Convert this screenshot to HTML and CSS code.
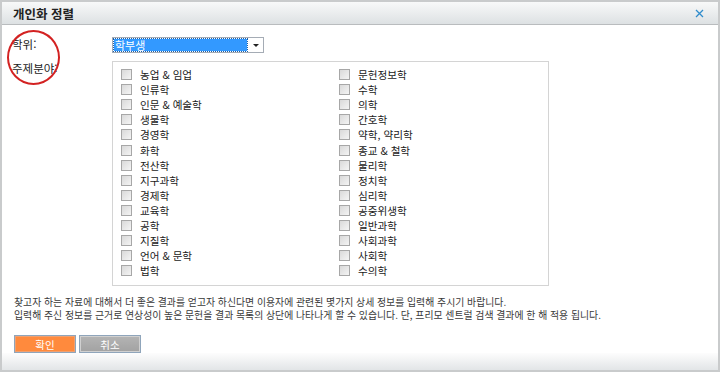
FILE: index.html
```html
<!DOCTYPE html>
<html lang="ko">
<head>
  <meta charset="UTF-8">
  <title>개인화 정렬</title>
  <link rel="stylesheet" href="styles.css">
</head>
<body>
  <div class="dialog">
    <div class="titlebar">
      <span class="title">개인화 정렬</span>
      <svg class="close" width="9" height="9" viewBox="0 0 9 9">
        <path d="M1 1 L8 8 M8 1 L1 8" stroke="#2f8ccc" stroke-width="1.3" fill="none"/>
      </svg>
    </div>

    <div class="content">
      <div class="mark"></div>

      <div class="form-row">
        <label class="field-label">학위:</label>
        <div class="select">
          <span class="select-value">학부생</span>
          <span class="select-arrow"></span>
        </div>
      </div>

      <div class="form-row subjects">
        <label class="field-label">주제분야:</label>
        <div class="subject-box">
          <ul class="subject-col">
            <li><span class="chk"></span>농업 &amp; 임업</li>
            <li><span class="chk"></span>인류학</li>
            <li><span class="chk"></span>인문 &amp; 예술학</li>
            <li><span class="chk"></span>생물학</li>
            <li><span class="chk"></span>경영학</li>
            <li><span class="chk"></span>화학</li>
            <li><span class="chk"></span>전산학</li>
            <li><span class="chk"></span>지구과학</li>
            <li><span class="chk"></span>경제학</li>
            <li><span class="chk"></span>교육학</li>
            <li><span class="chk"></span>공학</li>
            <li><span class="chk"></span>지질학</li>
            <li><span class="chk"></span>언어 &amp; 문학</li>
            <li><span class="chk"></span>법학</li>
          </ul>
          <ul class="subject-col">
            <li><span class="chk"></span>문헌정보학</li>
            <li><span class="chk"></span>수학</li>
            <li><span class="chk"></span>의학</li>
            <li><span class="chk"></span>간호학</li>
            <li><span class="chk"></span>약학, 약리학</li>
            <li><span class="chk"></span>종교 &amp; 철학</li>
            <li><span class="chk"></span>물리학</li>
            <li><span class="chk"></span>정치학</li>
            <li><span class="chk"></span>심리학</li>
            <li><span class="chk"></span>공중위생학</li>
            <li><span class="chk"></span>일반과학</li>
            <li><span class="chk"></span>사회과학</li>
            <li><span class="chk"></span>사회학</li>
            <li><span class="chk"></span>수의학</li>
          </ul>
        </div>
      </div>

      <p class="notice">
        찾고자 하는 자료에 대해서 더 좋은 결과를 얻고자 하신다면 이용자에 관련된 몇가지 상세 정보를 입력해 주시기 바랍니다.<br>
        입력해 주신 정보를 근거로 연상성이 높은 문헌을 결과 목록의 상단에 나타나게 할 수 있습니다. 단, 프리모 센트럴 검색 결과에 한 해 적용 됩니다.
      </p>

      <div class="buttons">
        <button class="btn btn-ok">확인</button>
        <button class="btn btn-cancel">취소</button>
      </div>
    </div>

    <div class="footer"></div>
  </div>
</body>
</html>
```

FILE: styles.css
```css
body {
  margin: 0;
  font-family: "Noto Sans CJK KR", "Noto Sans", sans-serif;
  color: #333;
  background: #fff;
}
.dialog {
  width: 716px;
  height: 368px;
  border: 2px solid #c9cbcc;
  display: flex;
  flex-direction: column;
  background: #fff;
  overflow: hidden;
}
.titlebar {
  height: 22px;
  flex: none;
  display: flex;
  align-items: center;
  justify-content: space-between;
  padding: 0 11px;
  background: linear-gradient(#f8f9f9, #dde1e3);
  border-bottom: 1px solid #b9bcbe;
}
.title {
  font-size: 12.5px;
  font-weight: bold;
  color: #222;
}
.close {
  margin-right: 3px;
}
.content {
  flex: 1;
  position: relative;
  padding: 12px 10px 0;
}
.mark {
  position: absolute;
  left: 5px;
  top: 5px;
  width: 49px;
  height: 51px;
  border: 2.5px solid #d32222;
  border-radius: 50%;
}
.form-row {
  display: flex;
  align-items: flex-start;
}
.field-label {
  width: 100px;
  flex: none;
  font-size: 11.5px;
  color: #222;
  line-height: 14px;
}
.select {
  width: 148px;
  height: 12px;
  border: 1px solid #a5acb5;
  padding: 1px;
  display: flex;
  align-items: center;
  justify-content: space-between;
}
.select-value {
  background: #3399ff;
  color: #fff;
  font-size: 11px;
  line-height: 12px;
  width: 132px;
  padding-left: 1px;
  outline: 1px dotted #1a5fa8;
}
.select-arrow {
  width: 0;
  height: 0;
  border-left: 3px solid transparent;
  border-right: 3px solid transparent;
  border-top: 3px solid #222;
  margin-right: 3px;
}
.subjects {
  margin-top: 8px;
}
.subject-box {
  width: 419px;
  border: 1px solid #d4d4d4;
  padding: 5px 8px 7px;
  display: flex;
}
.subject-col {
  list-style: none;
  margin: 0;
  padding: 0;
  width: 218px;
  flex: none;
}
.subject-col + .subject-col {
  width: 201px;
}
.subject-col li {
  height: 15.1px;
  display: flex;
  align-items: center;
  font-size: 10.6px;
  color: #1a1a1a;
  white-space: nowrap;
}
.chk {
  width: 9px;
  height: 9px;
  border: 1px solid #a7a7a7;
  background: linear-gradient(135deg, #d9d9d9, #f4f4f4);
  margin-right: 8px;
  flex: none;
}
.notice {
  margin: 10px 0 0 2px;
  font-size: 9.9px;
  line-height: 13px;
  color: #3a3a3a;
}
.buttons {
  margin: 13px 0 0 2px;
  display: flex;
  gap: 3px;
}
.btn {
  width: 62px;
  height: 18px;
  padding: 0;
  font-family: inherit;
  font-size: 10.5px;
  color: #fff;
  cursor: pointer;
  border: 1px solid #8fa5bb;
}
.btn-ok {
  background: #ff8a3d;
  box-shadow: inset 0 0 0 1px #f0a070;
}
.btn-cancel {
  background: linear-gradient(#b4b4b4, #a2a2a2);
  box-shadow: inset 0 0 0 1px #d0d0d0;
}
.footer {
  height: 17px;
  flex: none;
  background: linear-gradient(#fdfdfd, #e2e5e7);
}
```
